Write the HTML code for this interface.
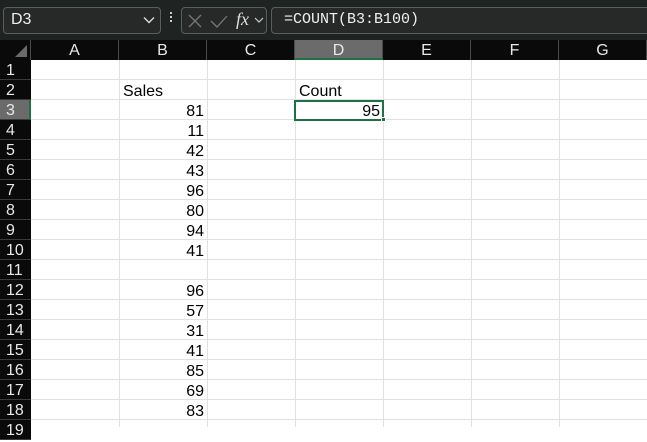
<!DOCTYPE html><html><head><style>
*{margin:0;padding:0;box-sizing:border-box}
body{width:647px;height:427px;overflow:hidden;background:#fff;font-family:"Liberation Sans",Arial,sans-serif;position:relative}
.a{position:absolute}
.top{left:0;top:0;width:647px;height:40px;background:#1f2322}
.box{border:1px solid #5a5e5d;border-radius:4px;background:#262928}
.ch{top:40px;height:20px;background:#0a0a0a;color:#e8e8e8;font-size:16px;text-align:center;line-height:22px;border-right:1px solid #4a4a4a}
.rh{left:0;width:31px;height:20px;background:#0a0a0a;color:#e8e8e8;font-size:16px;line-height:22px;padding-left:6px;border-bottom:1px solid #3a3a3a}
.hl{left:31px;width:616px;height:1px;background:#e1e1e1}
.vl{top:60px;width:1px;height:367px;background:#e1e1e1}
.t{font-size:16px;color:#000;line-height:20px}
</style></head><body>
<div class="a top"></div>
<div class="a box" style="left:3px;top:7px;width:158px;height:27px"></div>
<div class="a" style="left:11px;top:11px;color:#eee;font-size:16px">D3</div>
<svg class="a" style="left:143px;top:16px" width="12" height="8"><path d="M1 1.5 L6 6.5 L11 1.5" stroke="#ddd" stroke-width="1.4" fill="none"/></svg>
<div class="a" style="left:170px;top:12px;width:2px;height:2px;background:#ccc;box-shadow:0 4px 0 #ccc,0 8px 0 #ccc"></div>
<div class="a box" style="left:181px;top:7px;width:86px;height:27px"></div>
<svg class="a" style="left:186px;top:13px" width="20" height="16"><path d="M3 2 L15 14 M15 2 L3 14" stroke="#777" stroke-width="1.3"/></svg>
<svg class="a" style="left:209px;top:13px" width="20" height="16"><path d="M2 8 L8 14 L18 3" stroke="#777" stroke-width="1.3" fill="none"/></svg>
<div class="a" style="left:236px;top:9px;color:#ddd;font-family:'Liberation Serif',serif;font-style:italic;font-size:18px">fx</div>
<svg class="a" style="left:254px;top:17px" width="10" height="7"><path d="M1 1 L5 5 L9 1" stroke="#ccc" stroke-width="1.2" fill="none"/></svg>
<div class="a box" style="left:271px;top:7px;width:390px;height:27px"></div>
<div class="a" style="left:284px;top:11px;color:#f0f0f0;font-family:'Liberation Mono',monospace;font-size:15px">=COUNT(B3:B100)</div>
<div class="a" style="left:0;top:40px;width:31px;height:20px;background:#0a0a0a;border-right:1px solid #4a4a4a"></div>
<svg class="a" style="left:14px;top:44px" width="14" height="14"><path d="M13 1 L13 13 L1 13 Z" fill="#6a6a6a"/></svg>
<div class="a ch" style="left:31px;width:88px">A</div>
<div class="a ch" style="left:119px;width:88px">B</div>
<div class="a ch" style="left:207px;width:88px">C</div>
<div class="a ch" style="left:295px;width:88px;background:#6b6b6b;border-bottom:2px solid #1e7145">D</div>
<div class="a ch" style="left:383px;width:88px">E</div>
<div class="a ch" style="left:471px;width:88px">F</div>
<div class="a ch" style="left:559px;width:88px">G</div>
<div class="a" style="left:0;top:60px;width:31px;height:367px;background:#0a0a0a;border-right:1px solid #4a4a4a"></div>
<div class="a rh" style="top:60px">1</div><div class="a rh" style="top:80px">2</div>
<div class="a rh" style="top:100px;background:#6b6b6b;border-right:2px solid #1e7145">3</div>
<div class="a rh" style="top:120px">4</div><div class="a rh" style="top:140px">5</div><div class="a rh" style="top:160px">6</div><div class="a rh" style="top:180px">7</div><div class="a rh" style="top:200px">8</div><div class="a rh" style="top:220px">9</div><div class="a rh" style="top:240px">10</div><div class="a rh" style="top:260px">11</div><div class="a rh" style="top:280px">12</div><div class="a rh" style="top:300px">13</div><div class="a rh" style="top:320px">14</div><div class="a rh" style="top:340px">15</div><div class="a rh" style="top:360px">16</div><div class="a rh" style="top:380px">17</div><div class="a rh" style="top:400px">18</div><div class="a rh" style="top:420px">19</div>
<div class="a hl" style="top:79px"></div><div class="a hl" style="top:99px"></div><div class="a hl" style="top:119px"></div><div class="a hl" style="top:139px"></div><div class="a hl" style="top:159px"></div><div class="a hl" style="top:179px"></div><div class="a hl" style="top:199px"></div><div class="a hl" style="top:219px"></div><div class="a hl" style="top:239px"></div><div class="a hl" style="top:259px"></div><div class="a hl" style="top:279px"></div><div class="a hl" style="top:299px"></div><div class="a hl" style="top:319px"></div><div class="a hl" style="top:339px"></div><div class="a hl" style="top:359px"></div><div class="a hl" style="top:379px"></div><div class="a hl" style="top:399px"></div><div class="a hl" style="top:419px"></div>
<div class="a vl" style="left:119px"></div><div class="a vl" style="left:207px"></div><div class="a vl" style="left:295px"></div><div class="a vl" style="left:383px"></div><div class="a vl" style="left:471px"></div><div class="a vl" style="left:559px"></div>
<div class="a t" style="left:123px;top:82px">Sales</div>
<div class="a t" style="left:299px;top:82px">Count</div>
<div class="a t" style="left:119px;top:102px;width:85px;text-align:right">81<br>11<br>42<br>43<br>96<br>80<br>94<br>41<br>&nbsp;<br>96<br>57<br>31<br>41<br>85<br>69<br>83</div>
<div class="a" style="left:294px;top:100px;width:90px;height:21px;border:2px solid #1e7145"></div>
<div class="a t" style="left:295px;top:102px;width:85px;text-align:right">95</div>
<div class="a" style="left:381px;top:117px;width:5px;height:5px;background:#1e7145;border:1px solid #fff"></div>
</body></html>
